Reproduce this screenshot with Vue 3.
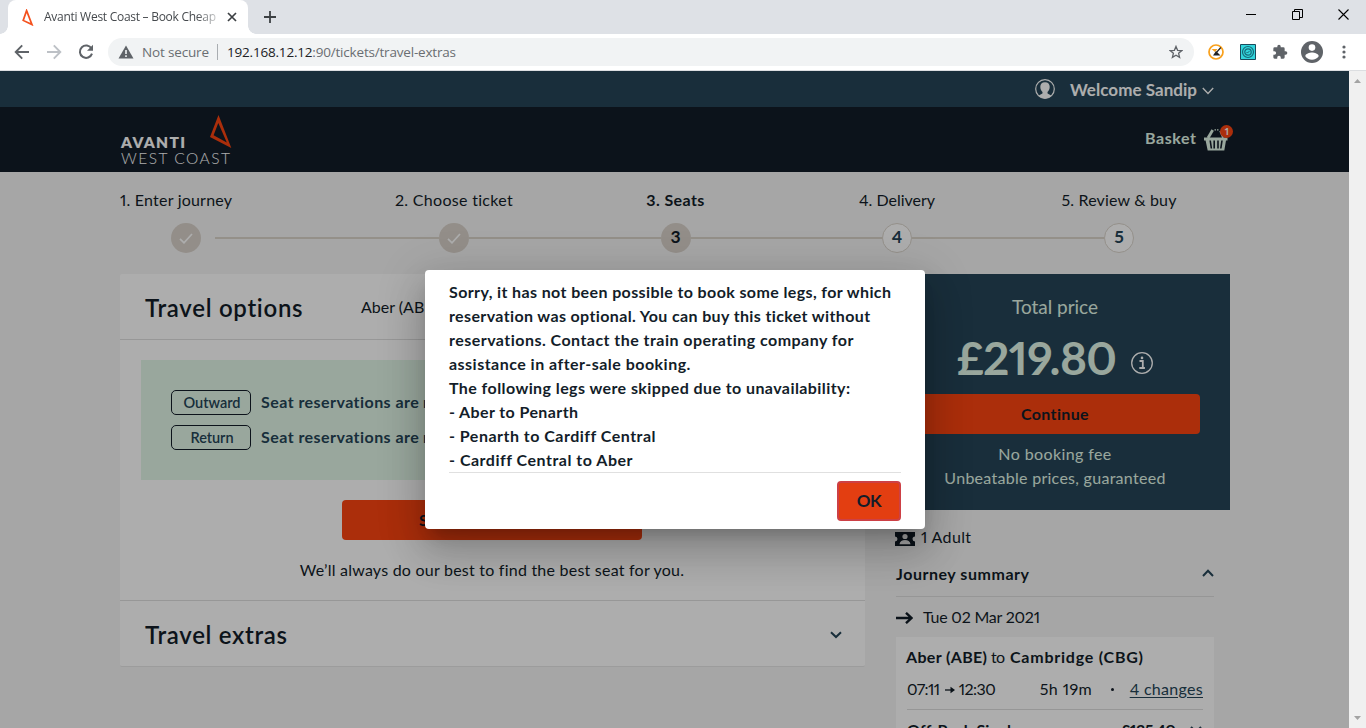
<script setup>
import { ref } from 'vue'

// Tracks a label so that its text spans the given width in pixels.
const vFit = {
  mounted(el, { value }) {
    const range = document.createRange()
    range.selectNodeContents(el)
    const natural = range.getBoundingClientRect().width
    const gaps = el.textContent.trim().length - 1
    if (gaps > 0) el.style.letterSpacing = `${((value - natural) / gaps).toFixed(3)}px`
  },
}

const steps = [
  { n: 1, label: '1. Enter journey', w: 112, state: 'done' },
  { n: 2, label: '2. Choose ticket', w: 118, state: 'done' },
  { n: 3, label: '3. Seats', w: 58, state: 'current' },
  { n: 4, label: '4. Delivery', w: 76, state: 'next' },
  { n: 5, label: '5. Review & buy', w: 115, state: 'next' },
]

const reservations = [
  { leg: 'Outward', w: 57 },
  { leg: 'Return', w: 43 },
]

const messages = [
  { t: 'Sorry, it has not been possible to book some legs, for which', w: 442 },
  { t: 'reservation was optional. You can buy this ticket without', w: 422 },
  { t: 'reservations. Contact the train operating company for', w: 405 },
  { t: 'assistance in after-sale booking.', w: 241 },
  { t: 'The following legs were skipped due to unavailability:', w: 401 },
  { t: '- Aber to Penarth', w: 129 },
  { t: '- Penarth to Cardiff Central', w: 206 },
  { t: '- Cardiff Central to Aber', w: 183 },
]

const dialogOpen = ref(true)
</script>

<template>
  <div class="window">
    <div class="tabstrip">
      <div class="tab">
        <svg class="favicon" width="12" height="17" viewBox="0 0 12 17"><path d="M4.6 1.6 L1.2 11.4 L10 15.6 Z" fill="none" stroke="#f4511e" stroke-width="1.7" /></svg>
        <span class="tab-title" v-fit="172">Avanti West Coast – Book Cheap</span>
        <svg class="tab-close" width="10" height="10" viewBox="0 0 10 10"><path d="M1 1l8 8M9 1l-8 8" stroke="#3c4043" stroke-width="1.7" /></svg>
      </div>
      <svg class="new-tab" width="12" height="12" viewBox="0 0 12 12"><path d="M6 0v12M0 6h12" stroke="#3c4043" stroke-width="1.8" /></svg>
      <div class="controls">
        <span><svg width="11" height="11" viewBox="0 0 11 11"><path d="M0 5.5h10" stroke="#000" /></svg></span>
        <span><svg width="11" height="11" viewBox="0 0 11 11"><path d="M.5 2.5h7v8h-7zM2.5 2.5v-2h8v8h-3" fill="none" stroke="#000" /></svg></span>
        <span><svg width="11" height="11" viewBox="0 0 11 11"><path d="M.5 .5l10 10M10.500 .5l-10 10" stroke="#000" stroke-width="1.1" /></svg></span>
      </div>
    </div>

    <div class="toolbar">
      <span class="cell"><svg width="16" height="16" viewBox="0 0 16 16"><path d="M15 8H2M8.200 1.400L1.700 8l6.500 6.600" fill="none" stroke="#5f6368" stroke-width="1.9" /></svg></span>
      <span class="cell"><svg width="16" height="16" viewBox="0 0 16 16"><path d="M1 8h13M7.800 1.400L14.300 8l-6.500 6.600" fill="none" stroke="#bdc1c6" stroke-width="1.9" /></svg></span>
      <span class="cell"><svg width="16" height="16" viewBox="0 0 16 16"><path d="M13.500 4.600A6.200 6.200 0 1 0 14 9.600" fill="none" stroke="#5f6368" stroke-width="2" /><path d="M15 .8v6H9z" fill="#5f6368" /></svg></span>
      <div class="omnibox">
        <svg class="warning" width="16" height="14" viewBox="0 0 16 14"><path d="M8 .5L15.500 13.500H.5z" fill="#5f6368" /><path d="M8 5v4M8 10.200v1.700" stroke="#f1f3f4" stroke-width="1.6" /></svg>
        <span class="insecure" v-fit="67">Not secure</span>
        <i></i>
        <span class="url" v-fit="229"><b>192.168.12.12</b>:90/tickets/travel-extras</span>
        <svg class="star" width="14" height="14" viewBox="0 0 14 14"><path d="M7 1.400l1.600 3.900 4.200.3-3.200 2.700 1 4.100L7 10.200l-3.600 2.200 1-4.100L1.200 5.600l4.200-.3z" fill="none" stroke="#5f6368" stroke-width="1.3" /></svg>
      </div>
      <span class="cell"><svg width="16" height="16" viewBox="0 0 16 16"><circle cx="8" cy="8" r="7" fill="#fff" stroke="#f9a01b" stroke-width="1.7" /><path d="M3.500 5h6L7 8z" fill="#f9a01b" /><path d="M12.800 3.500L8 9" stroke="#222" stroke-width="1.200" /><path d="M8 7l4.500 4.500H5z" fill="#222" /></svg></span>
      <span class="cell"><svg width="16" height="16" viewBox="0 0 16 16"><path d="M.5.5h15v15H.5z" fill="#32d5dc" stroke="#194b5c" /><circle cx="8" cy="8" r="5.500" fill="none" stroke="#176a78" stroke-width="1.200" /><circle cx="8" cy="8" r="3.200" fill="none" stroke="#176a78" stroke-width="1.200" /><path d="M6.500 8l1 1 2-2" fill="none" stroke="#176a78" /></svg></span>
      <span class="cell"><svg width="16" height="16" viewBox="0 0 24 24"><path d="M20.500 11H19V7a2 2 0 0 0-2-2h-4V3.500a2.500 2.500 0 0 0-5 0V5H4a2 2 0 0 0-2 2v3.800h1.500a2.700 2.700 0 0 1 0 5.400H2V20a2 2 0 0 0 2 2h3.800v-1.500a2.700 2.700 0 0 1 5.400 0V22H17a2 2 0 0 0 2-2v-4h1.500a2.500 2.500 0 0 0 0-5z" fill="#5f6368" /></svg></span>
      <span class="cell"><svg width="22" height="22" viewBox="0 0 22 22"><circle cx="11" cy="11" r="11" fill="#5f6368" /><circle cx="11" cy="6.600" r="3.300" fill="#fff" /><path d="M4.300 15.200c0-2.300 4.400-3.600 6.700-3.600s6.700 1.300 6.700 3.600c-1.500 2.200-3.900 3.500-6.700 3.500s-5.200-1.300-6.700-3.500z" fill="#fff" /></svg></span>
      <span class="cell"><svg width="4" height="14" viewBox="0 0 4 14"><g fill="#5f6368"><circle cx="2" cy="2" r="1.600" /><circle cx="2" cy="7" r="1.600" /><circle cx="2" cy="12" r="1.600" /></g></svg></span>
    </div>

    <div class="viewport">
      <div class="page">
        <div class="account">
          <div class="wrap">
            <svg width="20" height="20" viewBox="0 0 20 20"><circle cx="10" cy="10" r="9.300" fill="none" stroke="#fff" stroke-width="1.200" /><path d="M10 3.200c-3.200 0-4.700 1.800-4.700 4.600 0 2.300.9 4.200 2.200 5.200v1.200c0 .8-2.600 1.300-4 2.500 1.500 1.600 4.200 2.600 6.500 2.600s5-1 6.500-2.600c-1.400-1.200-4-1.700-4-2.500V13c1.300-1 2.200-2.900 2.200-5.200 0-2.800-1.500-4.600-4.700-4.600z" fill="#fff" /></svg>
            <span class="welcome" v-fit="127">Welcome Sandip</span>
            <svg class="caret" width="12" height="8" viewBox="0 0 12 8"><path d="M.8 1l5.200 5.400L11.200 1" fill="none" stroke="#fff" stroke-width="1.400" /></svg>
          </div>
        </div>

        <header class="masthead">
          <div class="wrap">
            <div class="logo">
              <div class="logo-name"><span class="avanti" v-fit="64">AVANTI</span><span class="west" v-fit="109">WEST COAST</span></div>
              <svg class="logo-mark" width="22" height="34" viewBox="0 0 22 34"><path d="M8.500 0L21.300 33L0 21.900zM8.300 8L3.600 20.200L16.800 27.400z" fill="#fd4511" fill-rule="evenodd" /></svg>
            </div>
            <div class="basket">
              <span v-fit="51">Basket</span>
              <svg width="30" height="28" viewBox="0 0 30 28">
                <g fill="#e2f7e8"><path d="M1 12.500h23.500v3h-1.500L21.300 25.500H4.700L2.600 15.500H1z" /><path d="M5 13L9.700 5" stroke="#e2f7e8" stroke-width="2.800" /><path d="M11.500 4.800h4.500" stroke="#e2f7e8" stroke-width="1.200" stroke-dasharray="1.500 1" /><path d="M17 6l3 7" stroke="#e2f7e8" stroke-width="1.500" /></g>
                <path d="M7.200 15.500l1.200 8M11.200 15.500v8M15 15.500v8M19 15.500l-1.200 8" stroke="#131d29" stroke-width="1.600" />
                <circle cx="23.500" cy="6.500" r="6.500" fill="#fd4511" />
                <text x="23.700" y="10" text-anchor="middle" font-family="Lato" font-weight="700" font-size="10" fill="#fff">1</text>
              </svg>
            </div>
          </div>
        </header>

        <ol class="steps wrap">
          <li v-for="s in steps" :key="s.n" :class="s.state">
            <div class="label"><span v-fit="s.w">{{ s.label }}</span></div>
            <div class="track">
              <i class="before"></i>
              <b><svg v-if="s.state === 'done'" width="14" height="11" viewBox="0 0 14 11"><path d="M1 5.800l4 4L13 1" fill="none" stroke="#fff" stroke-width="1.700" /></svg><template v-else>{{ s.n }}</template></b>
              <i class="after"></i>
            </div>
          </li>
        </ol>

        <div class="columns wrap">
          <main class="options">
            <div class="section-head">
              <h2><span v-fit="158">Travel options</span></h2>
              <span class="route">Aber (ABE) to Cambridge (CBG)</span>
            </div>
            <div class="section-body">
              <div class="notice">
                <div v-for="r in reservations" :key="r.leg" class="notice-row">
                  <span class="pill"><span v-fit="r.w">{{ r.leg }}</span></span>
                  <span class="notice-text"><span v-fit="158">Seat reservations are</span>&nbsp;not available for this journey</span>
                </div>
              </div>
              <button class="action"><span v-fit="146">Seating preferences</span></button>
              <p><span v-fit="384">We’ll always do our best to find the best seat for you.</span></p>
            </div>
            <div class="section-head extras">
              <h2><span v-fit="142">Travel extras</span></h2>
              <svg width="12" height="8" viewBox="0 0 12 8"><path d="M1 1.200l5 4.800L11 1.200" fill="none" stroke="#254557" stroke-width="2" /></svg>
            </div>
          </main>

          <aside>
            <div class="total">
              <div class="total-label"><span v-fit="86">Total price</span></div>
              <div class="amount"><span v-fit="160">£219.80</span>
                <svg width="24" height="24" viewBox="0 0 24 24"><circle cx="12" cy="12" r="10.300" fill="none" stroke="#fff" stroke-width="1.300" /><path d="M9.500 10h3.300v7M9.300 17h5.600" fill="none" stroke="#fff" stroke-width="1.800" /><circle cx="12" cy="6.900" r="1.300" fill="#fff" /></svg>
              </div>
              <button class="action"><span v-fit="68">Continue</span></button>
              <div class="fee"><span v-fit="113">No booking fee</span></div>
              <div class="fee"><span v-fit="221">Unbeatable prices, guaranteed</span></div>
            </div>
            <div class="summary">
              <div class="pax">
                <svg width="20" height="14" viewBox="0 0 20 14"><path d="M0 0h20v4.500a2.500 2.500 0 0 0 0 5V14H0V9.500a2.500 2.500 0 0 0 0-5z" fill="#101b25" /><circle cx="10" cy="4.500" r="2.600" fill="#f5f5f5" /><path d="M4.500 12.200c.5-3 2.500-4.200 5.500-4.200s5 1.200 5.500 4.200z" fill="#f5f5f5" /></svg>
                <span v-fit="50">1 Adult</span>
              </div>
              <div class="summary-head">
                <span v-fit="133">Journey summary</span>
                <svg width="12" height="8" viewBox="0 0 12 8"><path d="M1 7l5-5.200L11 7" fill="none" stroke="#254557" stroke-width="2" /></svg>
              </div>
              <div class="date">
                <svg width="17" height="12" viewBox="0 0 17 12"><path d="M0 6h15M10 .8L15.500 6L10 11.200" fill="none" stroke="#101b25" stroke-width="2.400" /></svg>
                <span v-fit="117">Tue 02 Mar 2021</span>
              </div>
              <div class="ticket">
                <div class="ticket-route"><b v-fit="81">Aber (ABE)</b><span v-fit="14">to</span><b v-fit="133">Cambridge (CBG)</b></div>
                <div class="ticket-times">
                  <span v-fit="33">07:11</span>
                  <svg width="10" height="8" viewBox="0 0 10 8"><path d="M0 4h7" stroke="#101b25" stroke-width="1.300" /><path d="M5.500 .8L10 4L5.500 7.200z" fill="#101b25" /></svg>
                  <span v-fit="37">12:30</span>
                  <span class="duration" v-fit="52">5h 19m</span>
                  <i></i>
                  <a v-fit="73">4 changes</a>
                </div>
                <div class="fare">
                  <span v-fit="112">Off-Peak Single</span>
                  <span class="fare-price" v-fit="55">£135.40</span>
                  <svg width="12" height="8" viewBox="0 0 12 8"><path d="M1 1l5 5l5-5" fill="none" stroke="#254557" stroke-width="2" /></svg>
                </div>
              </div>
            </div>
          </aside>
        </div>
      </div>

      <div v-if="dialogOpen" class="backdrop">
        <div class="dialog">
          <div v-for="m in messages" :key="m.t" class="line"><span v-fit="m.w">{{ m.t }}</span></div>
          <div class="dialog-actions"><button @click="dialogOpen = false"><span v-fit="25">OK</span></button></div>
        </div>
      </div>

      <div class="scrollbar">
        <svg width="9" height="5" viewBox="0 0 9 5"><path d="M1 5l3.500-4L8 5z" fill="#a3a3a3" /></svg>
        <svg width="9" height="5" viewBox="0 0 9 5"><path d="M1 0l3.500 4L8 0z" fill="#a3a3a3" /></svg>
      </div>
    </div>
  </div>
</template>

<style>
body { overflow: hidden; }
</style>

<style scoped>
* { box-sizing: border-box; }
svg { display: block; flex: none; }
.window { width: 1366px; height: 728px; overflow: hidden; display: flex; flex-direction: column; background: #fff; font-family: "Open Sans", sans-serif; white-space: nowrap; }

.tabstrip { height: 34px; flex: none; background: #dee1e6; display: flex; align-items: center; padding-left: 8px; }
.tab { position: relative; width: 240px; height: 34px; background: #fff; border-radius: 8px 8px 0 0; display: flex; align-items: center; padding-left: 14px; }
.tab::before, .tab::after { content: ""; position: absolute; bottom: 0; width: 8px; height: 8px; }
.tab::before { left: -8px; background: radial-gradient(circle at 0 0, #dee1e6 7.5px, #fff 8px); }
.tab::after { right: -8px; background: radial-gradient(circle at 100% 0, #dee1e6 7.5px, #fff 8px); }
.tab-title { width: 173px; margin-left: 10px; font-size: 12px; line-height: 16px; color: #45494d; overflow: hidden; -webkit-mask-image: linear-gradient(90deg, #000 152px, rgba(0,0,0,.25) 173px); mask-image: linear-gradient(90deg, #000 152px, rgba(0,0,0,.25) 173px); }
.tab-close { margin-left: 10px; }
.new-tab { margin-left: 16px; }
.controls { margin-left: auto; display: flex; height: 28px; align-self: flex-start; }
.controls span { width: 46px; display: grid; place-items: center; }

.toolbar { height: 37px; flex: none; display: flex; align-items: center; padding: 0 6px; border-bottom: 1px solid #dcdee1; }
.cell { width: 32px; height: 32px; display: grid; place-items: center; }
.omnibox { flex: 1; height: 28px; margin: 0 6px; padding: 0 11px 0 10px; border-radius: 14px; background: #f1f3f4; display: flex; align-items: center; font-size: 13.5px; color: #6a6e72; }
.warning { margin-top: -1px; }
.insecure { width: 67px; margin-left: 8px; }
.omnibox i { width: 1px; height: 16px; margin: 0 9px 0 8px; background: #a9adb1; }
.url b { color: #202124; font-weight: 400; }
.star { margin-left: auto; }

.viewport { position: relative; flex: 1; min-height: 0; display: flex; overflow: hidden; font-family: Lato, sans-serif; }
.page { width: 1349px; height: 657px; overflow: hidden; background: #f5f5f5; color: #131d29; font-size: 16px; font-variant-numeric: proportional-nums; }
.wrap { width: 1110px; margin: 0 auto 0 120px; }
.account { height: 36px; background: #254557; }
.account .wrap { height: 36px; display: flex; align-items: center; justify-content: flex-end; padding-right: 16px; }
.welcome { width: 127px; margin-left: 15px; color: #fff; font-weight: 700; font-size: 17px; line-height: 36px; padding-top: 1px; }
.caret { margin: 3px 0 0 5px; }
.masthead { height: 65px; background: #131d29; }
.masthead .wrap { height: 65px; display: flex; justify-content: space-between; align-items: center; }
.logo { width: 111px; display: flex; align-self: flex-start; }
.logo-name { width: 90px; padding: 27px 0 0 1px; color: #fff; display: flex; flex-direction: column; font-size: 15.5px; line-height: 16px; flex: none; }
.avanti { font-weight: 800; }
.west { font-weight: 300; }
.logo-mark { margin-top: 8px; }
.basket { display: flex; align-items: center; gap: 7px; margin: 0 -3px 1px 0; color: #e2f7e8; font-weight: 700; }
.basket span { width: 51px; margin-top: -3px; }

.steps { list-style: none; padding: 0; display: grid; grid-template-columns: 223px 222px 221px 222px 222px; margin-top: 18px; }
.label { text-align: center; line-height: 20px; height: 33px; }
.steps li:first-child .label { text-align: left; }
.current .label { font-weight: 700; }
.track { display: flex; align-items: center; height: 30px; }
.track i { flex: 1; height: 2px; background: #dad4cb; }
.track b { width: 30px; height: 30px; flex: none; border-radius: 50%; display: flex; align-items: center; justify-content: center; font-size: 17.5px; line-height: 28px; font-weight: 700; background: #d9d2ca; }
.current b { padding-bottom: 2px; }
.next b { background: #fff; border: 1px solid #dad4cb; color: #254557; padding-bottom: 2px; }
.steps li:first-child .before { flex: none; width: 51px; background: none; }
.steps li:first-child .after { margin-left: 14px; }
.steps li:last-child .after { background: none; }

.columns { display: flex; gap: 15px; margin-top: 21px; }
.options { width: 745px; height: 393px; flex: none; background: #fff; border-bottom: 1px solid #e6e6e6; border-radius: 2px; }
.section-head { height: 66px; display: flex; align-items: center; padding: 2px 24px 0 25px; border-bottom: 1px solid #dfdfdf; }
.route { margin-top: -2px; }
h2 { margin: 0; width: 216px; font-size: 24px; line-height: 30px; font-weight: 600; }
.section-body { height: 261px; border-bottom: 1px solid #dfdfdf; padding: 20px 22px 0 21px; }
.notice { height: 120px; padding: 30px; background: #e2f7e8; display: flex; flex-direction: column; gap: 10px; color: #254557; font-weight: 700; overflow: hidden; }
.notice-row { display: flex; align-items: center; height: 25px; gap: 10px; }
.notice-text { line-height: 20px; margin-top: -1px; }
.pill { width: 80px; height: 25px; flex: none; border: 1px solid #131d29; border-radius: 5px; text-align: center; font-size: 14.5px; line-height: 24px; padding-left: 2px; font-weight: 600; }
.action { display: block; height: 40px; border: 0; border-radius: 4px; background: #fd4511; color: #131d29; font: 700 16px/40px Lato, sans-serif; padding: 0; }
.options .action { width: 300px; margin: 20px auto 0; }
.section-body p { margin: 19px 0 0; text-align: center; line-height: 22px; }
.extras { border: 0; justify-content: space-between; height: 65px; padding: 2px 23px 0 25px; }

aside { width: 350px; flex: none; }
.total { height: 236px; background: #254557; color: #e2f7e8; padding: 20px 30px 0; text-align: center; }
.total-label { font-size: 19px; line-height: 26px; }
.amount { display: flex; align-items: center; height: 60px; margin-top: 8px; padding-left: 47px; font-size: 46px; font-weight: 700; line-height: 60px; }
.amount span { width: 159px; }
.amount svg { margin: 9px 0 0 14px; }
.total .action { width: 290px; margin-top: 6px; }
.fee { line-height: 24px; }
.action + .fee { margin-top: 8px; }
.summary { padding: 16px 16px 0; }
.pax { display: flex; align-items: center; height: 23px; gap: 6px; margin-left: -1px; }
.pax svg { margin-top: 2px; }
.pax span { margin-top: -2px; }
.summary-head { display: flex; align-items: center; justify-content: space-between; height: 48px; border-bottom: 1px solid #dedede; font-weight: 700; padding-top: 2px; }
.summary-head svg { margin-top: -2px; }
.date { display: flex; align-items: center; gap: 10px; height: 40px; padding-top: 1px; }
.date span { margin-top: -2px; }
.ticket { background: #fff; padding: 0 10px; height: 110px; }
.ticket-route { line-height: 40px; height: 41px; display: flex; }
.ticket-route span { width: 14px; margin: 0 5px 0 4px; }
.ticket-route b:first-child { width: 81px; }
.ticket-times { margin: 0 1px; display: flex; align-items: center; padding-bottom: 10px; height: 32px; border-bottom: 1px solid #dedede; line-height: 20px; }
.ticket-times svg { margin: 2px 4px 0 5px; }
.ticket-times span:first-child { width: 33px; }
.ticket-times span:nth-of-type(2) { width: 36px; }
.ticket-times .duration { width: 51px; margin-left: 45px; }
.ticket-times i { width: 3px; height: 3px; border-radius: 50%; background: #131d29; margin: 1px 16px 0 20px; }
.ticket-times a { color: #254557; text-decoration: underline; text-underline-offset: 2px; }
.fare { display: flex; align-items: center; margin: 7px 1px 0; height: 26px; line-height: 26px; font-weight: 700; }
.fare span:first-child { width: 112px; }
.fare .fare-price { width: 55px; margin: 0 14px 0 102px; }

.backdrop { position: absolute; left: 0; top: 0; width: 1349px; height: 657px; overflow: hidden; background: rgba(0, 0, 0, .32); display: flex; justify-content: center; align-items: flex-start; padding-top: 199px; }
.dialog { width: 500px; height: 259px; margin-left: 1px; background: #fff; border-radius: 4px; padding: 10px 24px 8px; color: #131d29; font-weight: 700; font-size: 16px; box-shadow: 0 11px 15px -7px rgba(0, 0, 0, .2), 0 24px 38px 3px rgba(0, 0, 0, .14), 0 9px 46px 8px rgba(0, 0, 0, .12); }
.line { height: 24px; line-height: 24px; }
.dialog-actions { border-top: 1px solid #e0e0e0; display: flex; justify-content: flex-end; padding-top: 8px; }
.dialog-actions button { width: 64px; height: 40px; border: 2px solid #cd4045; border-radius: 4px; background: #e33e11; color: #131d29; font: 700 17px/36px Lato, sans-serif; padding: 0; }
.scrollbar { width: 17px; background: #f0f0f0; display: flex; flex-direction: column; align-items: center; justify-content: space-between; padding: 7px 0; }
</style>
